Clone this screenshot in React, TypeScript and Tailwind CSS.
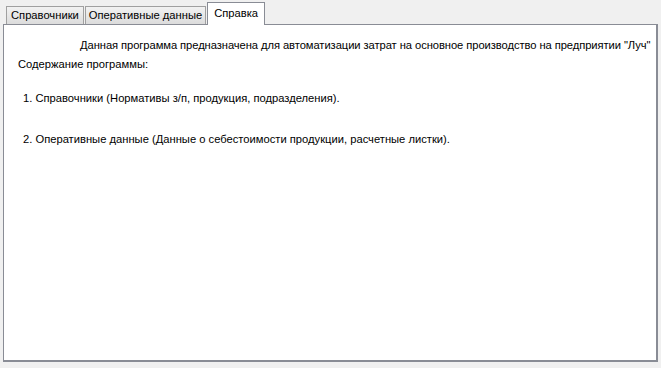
import React from 'react';

const tabs = ['Справочники', 'Оперативные данные', 'Справка'];

export default function App() {
    const active = 2;
    return (
        <div className="w-[661px] h-[368px] bg-[#f0f0f0] pt-[2px] px-[3px] pb-[6px] flex flex-col text-[11.2px] text-black" style={{ fontFamily: '"Liberation Sans", Arial, sans-serif' }}>
            {/* tab strip */}
            <div className="flex items-end h-[22px] pl-[3px] relative z-10">
                {tabs.map((t, i) => (
                    i === active ? (
                        <div key={t} className="h-[23px] -mb-[1px] px-[6px] pt-[2px] bg-white border border-b-0 border-[#898c95] leading-[16px]">
                            {t}
                        </div>
                    ) : (
                        <div key={t} className={`h-[18px] mr-[1px] bg-gradient-to-b from-[#f2f2f2] to-[#dcdcdc] border border-b-0 border-[#a0a0a0] leading-[16px] ${i === 0 ? 'px-[4px]' : 'px-[3px]'}`}>
                            {t}
                        </div>
                    )
                ))}
            </div>
            {/* panel */}
            <div className="flex-1 bg-white border border-[#898c95] border-b-2 border-r-2 pt-[12px]">
                <p className="pl-[76px] leading-[16px] whitespace-nowrap tracking-[-0.07px]">Данная программа предназначена для автоматизации затрат на основное производство на предприятии "Луч"</p>
                <p className="pl-[14px] mt-[3px] leading-[16px]">Содержание программы:</p>
                <p className="pl-[19px] mt-[18px] leading-[16px]">1. Справочники (Нормативы з/п, продукция, подразделения).</p>
                <p className="pl-[19px] mt-[25px] leading-[16px]">2. Оперативные данные (Данные о себестоимости продукции, расчетные листки).</p>
            </div>
        </div>
    );
}
